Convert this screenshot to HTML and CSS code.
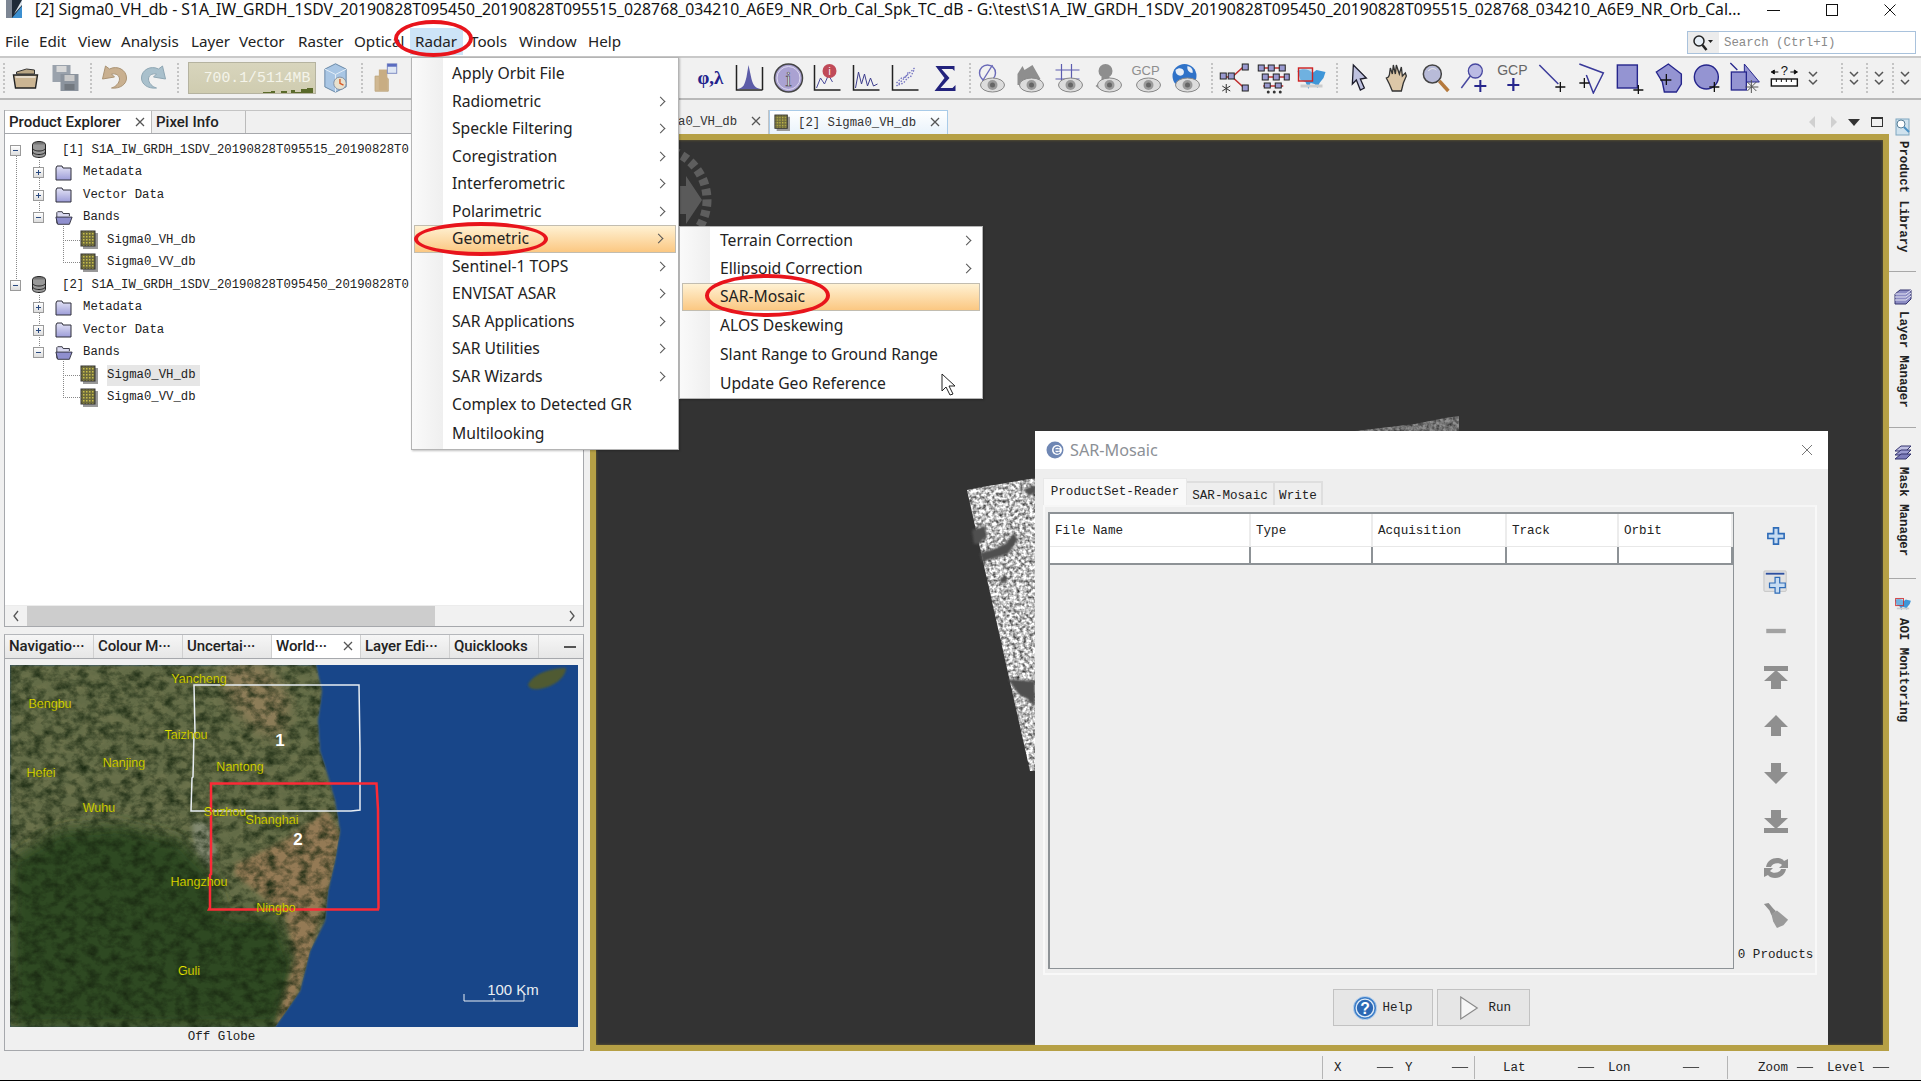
FILE: index.html
```html
<!DOCTYPE html>
<html lang="en">
<head>
<meta charset="utf-8">
<title>SNAP - SAR-Mosaic</title>
<link rel="stylesheet" href="styles.css">
</head>
<body>
<svg class="defs" width="0" height="0" aria-hidden="true">
  <defs>
    <linearGradient id="fold" x1="0" y1="0" x2="0" y2="1"><stop offset="0" stop-color="#e4e4f6"/><stop offset="1" stop-color="#9d9dd8"/></linearGradient>
    <symbol id="i-folder" viewBox="0 0 18 18"><path d="M1 4l1-2h5l1 2h8v12H1z" fill="url(#fold)" stroke="#2e2e3a"/></symbol>
    <symbol id="i-folder-open" viewBox="0 0 20 18"><path d="M2 15V3l1-1h5l1 2h7v3" fill="#d9d9f0" stroke="#2e2e3a"/><path d="M1 8h15l3 0-3 8H3z" fill="#8f8fce" stroke="#2e2e3a"/></symbol>
    <symbol id="i-db" viewBox="0 0 16 18"><ellipse cx="8" cy="3.5" rx="6.5" ry="3" fill="#777" stroke="#222"/><path d="M1.5 3.5v10c0 1.7 3 3 6.5 3s6.500-1.300 6.500-3v-10" fill="#999" stroke="#222"/><path d="M1.500 7c0 1.700 3 3 6.500 3s6.500-1.300 6.500-3M1.500 10.500c0 1.700 3 3 6.500 3s6.500-1.300 6.500-3" fill="none" stroke="#222"/></symbol>
    <pattern id="bandgrid" width="3" height="3" patternUnits="userSpaceOnUse"><rect width="3" height="3" fill="#6d6a3c"/><rect width="1.500" height="1.500" fill="#c7bd4a"/></pattern>
    <symbol id="i-band" viewBox="0 0 18 20"><rect x="3" y="3" width="15" height="16" fill="#999"/><rect x="1" y="1" width="14" height="15" fill="url(#bandgrid)" stroke="#333"/></symbol>

    <symbol id="t-open" viewBox="0 0 32 32"><path d="M6 10l10-3 8 1v4H6z" fill="#b9a684" stroke="#333"/><path d="M3 13h24l-2 13H5z" fill="#cbb593" stroke="#222" stroke-width="1.400"/><path d="M5 15h20" stroke="#fff"/></symbol>
    <symbol id="t-save" viewBox="0 0 32 32"><rect x="3" y="3" width="18" height="17" fill="#9aa2ac"/><rect x="7" y="4" width="10" height="6" fill="#d8d8d8"/><rect x="11" y="12" width="18" height="17" fill="#8b939d"/><rect x="15" y="13" width="10" height="6" fill="#c9c9c9"/><rect x="15" y="22" width="10" height="6" fill="#72787f"/></symbol>
    <symbol id="t-undo" viewBox="0 0 32 32"><path d="M7 4l-3 13 12-2-3-3c5-1 8 2 8 5 0 4-4 8-8 9 9 1 15-4 15-10C28 8 19 3 11 7z" fill="#c9b090" stroke="#ab9475"/></symbol>
    <symbol id="t-redo" viewBox="0 0 32 32"><path d="M25 4l3 13-12-2 3-3c-5-1-8 2-8 5 0 4 4 8 8 9C10 27 4 22 4 16 4 8 13 3 21 7z" fill="#a9c0cc" stroke="#8fa7b4"/></symbol>
    <symbol id="t-cube" viewBox="0 0 32 36"><path d="M4 8l12-6 12 6v20l-12 6-12-6z" fill="#a9c6e4" stroke="#5f7f9f"/><path d="M4 8l12 6 12-6M16 14v20" fill="none" stroke="#e9f1f9"/><circle cx="21" cy="24" r="7" fill="#e7e1cf" stroke="#7b8aa0"/><path d="M21 19v5l4 2" fill="none" stroke="#d9541e" stroke-width="1.500"/></symbol>
    <symbol id="t-export" viewBox="0 0 32 34"><path d="M6 15h11l3 3v13H6z" fill="#d0b892" stroke="#bfa880"/><rect x="10" y="8" width="9" height="22" fill="#c8ad83"/><rect x="19" y="2" width="10" height="10" fill="#dfe7f4" stroke="#7a88c0"/><rect x="19" y="2" width="10" height="3" fill="#5a6cc0"/></symbol>
    <symbol id="t-hist" viewBox="0 0 32 32"><path d="M3 3v25h26M29 28V5" fill="none" stroke="#222" stroke-width="1.500"/><path d="M4 27c6-1 7-4 9-12l2-12 3 14c2 7 4 9 9 10z" fill="#5c5ca8"/></symbol>
    <symbol id="t-info" viewBox="0 0 32 32"><circle cx="16" cy="16" r="14" fill="#aaa2d2" stroke="#444" stroke-width="1.500"/><circle cx="16" cy="16" r="11.500" fill="none" stroke="#dedaf0"/><text x="16" y="24" font-family="Liberation Serif, serif" font-size="22" text-anchor="middle" fill="#eee" stroke="#333" stroke-width=".6">i</text></symbol>
    <symbol id="t-pin" viewBox="0 0 32 32"><path d="M3 3v25h26" fill="none" stroke="#222" stroke-width="1.500"/><path d="M5 26l4-10 4 6 4-9 4 7" fill="none" stroke="#4a4a9a"/><circle cx="18" cy="9" r="7" fill="#c04a58"/><text x="18" y="13" font-size="10" text-anchor="middle" fill="#fff" font-family="Liberation Sans, sans-serif">i</text></symbol>
    <symbol id="t-spec" viewBox="0 0 32 32"><path d="M3 3v25h26" fill="none" stroke="#222" stroke-width="1.500"/><path d="M5 26l3-16 3 12 3-10 3 12 3-8 3 8 4-2" fill="none" stroke="#3c3c8c"/></symbol>
    <symbol id="t-scatter" viewBox="0 0 32 32"><path d="M3 3v25h26" fill="none" stroke="#222" stroke-width="1.500"/><path d="M7 24l4-4 3-3 3-3 4-4 4-4M9 23l5-2 4-5 3-1 4-8M7 21l5-5 4-1 3-5" fill="none" stroke="#7070c0" stroke-width="1.300" stroke-dasharray="1.500 1.500"/></symbol>
    <symbol id="t-sigma" viewBox="0 0 32 32"><path d="M7 4h19v5l-2-2H13l8 9-9 10h12l3-3v6H6l10-13z" fill="#22227c"/></symbol>
    <symbol id="t-eye" viewBox="0 0 32 32"><ellipse cx="18" cy="23" rx="12" ry="7" fill="#dcdcdc" stroke="#888"/><circle cx="18" cy="23" r="5" fill="#9a9a9a"/><circle cx="18" cy="23" r="2.500" fill="#666"/></symbol>
    <symbol id="t-eye1" viewBox="0 0 32 32"><circle cx="13" cy="11" r="8" fill="none" stroke="#6a6ab8" stroke-width="1.400"/><path d="M8 19L18 3" stroke="#6a6ab8" stroke-width="1.400"/><use href="#t-eye"/></symbol>
    <symbol id="t-eye2" viewBox="0 0 32 32"><path d="M4 12l5-8 2 4 8-5 8 14-9 6H4z" fill="#8e8e8e"/><use href="#t-eye"/></symbol>
    <symbol id="t-eye3" viewBox="0 0 32 32"><path d="M9 2v22M19 2v22M3 8h24M3 17h24" stroke="#5c5cb0" stroke-width="1.200"/><use href="#t-eye"/></symbol>
    <symbol id="t-eye4" viewBox="0 0 32 32"><circle cx="14" cy="9" r="7" fill="#8e8e8e"/><path d="M10 15h8v4l-10 8-4-3 6-5z" fill="#8e8e8e"/><use href="#t-eye"/></symbol>
    <symbol id="t-eye5" viewBox="0 0 32 32"><text x="15" y="13" font-size="13" text-anchor="middle" fill="#8e8e8e" font-family="Liberation Sans, sans-serif">GCP</text><use href="#t-eye"/></symbol>
    <symbol id="t-eye6" viewBox="0 0 32 32"><circle cx="15" cy="14" r="12" fill="#2f72c8"/><path d="M6 8c5-4 10 0 8 4-2 3-8 2-8-4zM18 4c4 1 6 4 5 7-3 0-6-3-5-7z" fill="#e8eef6"/><use href="#t-eye"/></symbol>
    <symbol id="t-graph" viewBox="0 0 32 32"><path d="M14 15L26 4M14 15l12 11M4 15h10" stroke="#c03030" stroke-width="1.600"/><rect x="2" y="11" width="6" height="6" fill="#9a9ad0" stroke="#222"/><rect x="10" y="11" width="6" height="6" fill="#9a9ad0" stroke="#222"/><rect x="24" y="2" width="6" height="6" fill="#9a9ad0" stroke="#222"/><rect x="24" y="23" width="6" height="6" fill="#9a9ad0" stroke="#222"/><path d="M8 22v9M4 24l8 5M12 24l-8 5" stroke="#333"/></symbol>
    <symbol id="t-graph2" viewBox="0 0 32 32"><path d="M4 6h24M6 15h24M6 24h20" stroke="#c03030" stroke-width="1.600"/><g fill="#9a9ad0" stroke="#222"><rect x="1" y="3" width="6" height="6"/><rect x="11" y="3" width="6" height="6"/><rect x="22" y="3" width="6" height="6"/><rect x="5" y="12" width="6" height="6"/><rect x="16" y="12" width="6" height="6"/><rect x="27" y="12" width="5" height="6"/><rect x="7" y="21" width="6" height="5"/><rect x="18" y="21" width="6" height="5"/></g><circle cx="11" cy="30" r="1.500" fill="#333"/><circle cx="17" cy="30" r="1.500" fill="#333"/><circle cx="23" cy="30" r="1.500" fill="#333"/></symbol>
    <symbol id="t-aoi" viewBox="0 0 32 32"><path d="M2 9c5-3 12-2 15 2l4-3 9 2-2 6-4 5-2 5-3-4-4-1-2 6-3-7-5-2z" fill="#3f96d8"/><path d="M5 24h22" stroke="#ccc" stroke-width="3"/><rect x="3" y="6" width="14" height="13" fill="#9fcbe8" fill-opacity=".5" stroke="#cf2020" stroke-width="1.400"/></symbol>
    <symbol id="t-cursor" viewBox="0 0 32 32"><path d="M10 3l13 13-6 1 4 9-4 2-4-10-4 4z" fill="#bfc2e0" stroke="#1d1d2c" stroke-width="1.300"/></symbol>
    <symbol id="t-hand" viewBox="0 0 32 32"><path d="M8 13l1-7 2 6 1-9 2 9 1-9 3 9 2-7 1 9 3-3 1 3-3 7-2 8H11l-3-7-3-6 2-1z" fill="#dcc7a8" stroke="#333" stroke-width="1.300"/></symbol>
    <symbol id="t-zoom" viewBox="0 0 32 32"><circle cx="12" cy="12" r="9" fill="#b8bbd8" stroke="#444" stroke-width="1.500"/><path d="M8 9c2-3 6-3 8-1" stroke="#eee" fill="none"/><path d="M19 19l9 10" stroke="#b5793c" stroke-width="3.500"/></symbol>
    <symbol id="t-pinadd" viewBox="0 0 32 32"><circle cx="16" cy="9" r="7" fill="#bbbbe4" stroke="#4848a0" stroke-width="1.300"/><path d="M11 14L2 26" stroke="#4848a0" stroke-width="1.500"/><path d="M21 18v12M15 24h12" stroke="#26268c" stroke-width="2"/></symbol>
    <symbol id="t-gcp" viewBox="0 0 32 32"><text x="15" y="13" font-size="14" text-anchor="middle" fill="#666" font-family="Liberation Sans, sans-serif">GCP</text><path d="M16 16v13M10 23h12" stroke="#26268c" stroke-width="2.200"/></symbol>
    <symbol id="t-line" viewBox="0 0 32 32"><path d="M3 3l19 19" stroke="#3a3a9a" stroke-width="1.500"/><path d="M24 20v10M19 25h10" stroke="#111" stroke-width="1.300"/></symbol>
    <symbol id="t-polyline" viewBox="0 0 32 32"><path d="M4 2l24 9-10 20-7-18" fill="none" stroke="#3a3a9a" stroke-width="1.500"/><path d="M9 16v10M4 21h10" stroke="#111" stroke-width="1.300"/></symbol>
    <symbol id="t-rect" viewBox="0 0 32 32"><rect x="4" y="3" width="20" height="23" fill="#9494d2" stroke="#26268c" stroke-width="1.400"/><path d="M25 23v9M20 28h10" stroke="#111" stroke-width="1.300"/></symbol>
    <symbol id="t-polygon" viewBox="0 0 32 32"><path d="M4 10L16 2l13 10v10l-5 8H12l-2-10z" fill="#9494d2" stroke="#26268c" stroke-width="1.400"/><path d="M14 12v11M8 18h11" stroke="#111" stroke-width="1.300"/></symbol>
    <symbol id="t-circle" viewBox="0 0 32 32"><circle cx="15" cy="15" r="12" fill="#9494d2" stroke="#26268c" stroke-width="1.400"/><path d="M23 20v10M18 25h10" stroke="#111" stroke-width="1.300"/></symbol>
    <symbol id="t-shapes" viewBox="0 0 32 32"><path d="M15 2l15 18H15z" fill="#9494d2" stroke="#26268c"/><path d="M1 1l7 7" stroke="#26268c" stroke-width="1.300"/><rect x="2" y="10" width="15" height="18" fill="#9494d2" stroke="#26268c" stroke-width="1.300"/><path d="M22 18v13M16 25h13M18 20l9 9M27 20l-9 9" stroke="#555" stroke-width="1"/></symbol>
    <symbol id="t-measure" viewBox="0 0 32 32"><text x="16" y="13" font-size="13" text-anchor="middle" fill="#111" font-family="Liberation Sans, sans-serif">?</text><path d="M3 10h7M22 10h7M3 10l3-2v4zM29 10l-3-2v4z" stroke="#111"/><rect x="3" y="17" width="26" height="7" fill="#fff" stroke="#111" stroke-width="1.400"/><path d="M8 17v3M13 17v3M18 17v3M23 17v3" stroke="#111"/></symbol>
    <symbol id="t-chev" viewBox="0 0 12 16"><path d="M2 2l4 4 4-4M2 10l4 4 4-4" fill="none" stroke="#555" stroke-width="1.500"/></symbol>

    <symbol id="d-plus" viewBox="-4 -4 32 32"><path d="M9 2h6v7h7v6h-7v7H9v-7H2V9h7z" fill="#c7dcf2" stroke="#2f6cb8" stroke-width="2"/></symbol>
    <symbol id="d-addfile" viewBox="0 0 28 28"><rect x="1" y="1" width="24" height="22" rx="1" fill="#e2e2e2" stroke="#c2c2c2"/><path d="M3 4h20" stroke="#2c4fa0" stroke-width="2"/><path d="M13 8h5v6h6v5h-6v6h-5v-6H7v-5h6z" fill="#c7dcf2" stroke="#2f6cb8" stroke-width="1.300"/></symbol>
    <symbol id="d-minus" viewBox="0 0 24 24"><rect x="3" y="10" width="18" height="4" fill="#a2a2a2"/></symbol>
    <symbol id="d-top" viewBox="0 0 26 26"><rect x="1" y="1" width="24" height="5" fill="#8f8f8f"/><path d="M13 5l12 11h-7v8H8v-8H1z" fill="#8f8f8f"/></symbol>
    <symbol id="d-up" viewBox="0 0 26 26"><path d="M13 2l12 12h-7v9H8v-9H1z" fill="#8f8f8f"/></symbol>
    <symbol id="d-down" viewBox="0 0 26 26"><path d="M13 24L1 12h7V3h10v9h7z" fill="#8f8f8f"/></symbol>
    <symbol id="d-bottom" viewBox="0 0 26 26"><rect x="1" y="20" width="24" height="5" fill="#8f8f8f"/><path d="M13 21L1 10h7V2h10v8h7z" fill="#8f8f8f"/></symbol>
    <symbol id="d-refresh" viewBox="0 0 26 26"><path d="M3 12C4 6 9 3 14 3c3 0 6 1 7 3l4-2v9h-9l3-3c-3-3-10-2-11 2zM23 14c-1 6-6 9-11 9-3 0-6-1-7-3l-4 2v-9h9l-3 3c3 3 10 2 11-2z" fill="#8f8f8f"/></symbol>
    <symbol id="d-broom" viewBox="0 0 28 28"><path d="M1 1l5-1 5 6 3 3-5 4-2-5z" fill="#8f8f8f"/><path d="M9 12l6-4 12 10-5 6-7 3-4-7z" fill="#9a9a9a"/></symbol>
    <symbol id="b-help" viewBox="0 0 28 28"><circle cx="14" cy="14" r="12.500" fill="#3f7fc8" stroke="#bcd4ee" stroke-width="1"/><circle cx="14" cy="14" r="9.500" fill="#2c68b4" stroke="#e0ecf8" stroke-width="1.400"/><text x="14" y="20" font-size="17" font-weight="700" text-anchor="middle" fill="#fff" font-family="Liberation Sans, sans-serif">?</text></symbol>
    <symbol id="b-run" viewBox="0 0 24 28"><path d="M3 2l18 12L3 26z" fill="#f6f6f6" stroke="#8a8a8a" stroke-width="1.300"/></symbol>
    <symbol id="s-lib" viewBox="0 0 18 18"><rect x="2" y="1" width="13" height="16" fill="#cfe2ee" stroke="#7ea6bf"/><circle cx="7" cy="6" r="4" fill="#fff" stroke="#5a7f97"/><path d="M10 9l5 5" stroke="#4a90c4" stroke-width="2"/></symbol>
    <symbol id="s-layer" viewBox="0 0 18 18"><path d="M1 6l5-4h11v9l-5 5H1z" fill="#8d8dc4" stroke="#34346e"/><path d="M1 9h11l5-4M1 12h11l5-4M1 6h11l5-4" fill="none" stroke="#e6e6f4"/></symbol>
    <symbol id="s-mask" viewBox="0 0 18 18"><path d="M1 7l6-5h10l-5 5z" fill="#bfbfe2" stroke="#34346e"/><path d="M1 11l6-5h10l-5 5z" fill="#9a9ad0" stroke="#34346e"/><path d="M1 15l6-5h10l-5 5z" fill="#7d7dbb" stroke="#34346e"/></symbol>
    <symbol id="a-x" viewBox="0 0 10 10"><path d="M1 1l8 8M9 1l-8 8" stroke="#555" stroke-width="1.300"/></symbol>
    <symbol id="a-right" viewBox="0 0 8 12"><path d="M2 1l4 5-4 5" fill="none" stroke="#555" stroke-width="1.300"/></symbol>
    <filter id="speckle" x="0" y="0" width="100%" height="100%" color-interpolation-filters="sRGB"><feTurbulence type="fractalNoise" baseFrequency=".3" numOctaves="2" seed="4"/><feColorMatrix values="0 1.500 0 0 0  0 1.500 0 0 0  0 1.500 0 0 0  0 0 0 0 1"/><feGaussianBlur stdDeviation=".6"/><feComposite in2="SourceAlpha" operator="in"/></filter>
    <filter id="terrain" x="0" y="0" width="100%" height="100%" color-interpolation-filters="sRGB"><feTurbulence type="fractalNoise" baseFrequency=".09 .12" numOctaves="4" seed="8"/><feColorMatrix values="0 0 0 0 .10  0 0 0 0 .16  0 0 0 0 .07  0 1.900 0 0 -.72"/><feComposite in2="SourceAlpha" operator="in"/></filter>
    <filter id="lighter" x="0" y="0" width="100%" height="100%" color-interpolation-filters="sRGB"><feTurbulence type="fractalNoise" baseFrequency=".07 .1" numOctaves="4" seed="21"/><feColorMatrix values="0 0 0 0 .58  0 0 0 0 .56  0 0 0 0 .38  0 2.400 0 0 -.95"/><feComposite in2="SourceAlpha" operator="in"/></filter>
    <filter id="soft" x="-10%" y="-10%" width="120%" height="120%"><feGaussianBlur stdDeviation="7"/></filter>
    <filter id="soft2" x="-10%" y="-10%" width="120%" height="120%"><feGaussianBlur stdDeviation="2.500"/></filter>
    <filter id="soft1" x="-5%" y="-5%" width="110%" height="110%"><feGaussianBlur stdDeviation="1.200"/></filter>
    <clipPath id="landclip"><path d="M306 0l6 26-4 30 2 30 8 25 7 25 5 30-5 30-7 30-3 30-15 30-10 40-25 36H0V0z"/></clipPath>
  </defs>
</svg>

<div class="app">
  <header class="titlebar">
    <svg class="appicon" viewBox="0 0 16 18"><rect width="16" height="18" fill="#1f2a38"/><rect x="0" width="6" height="18" fill="#7d8694"/><path d="M6 18L16 6v12z" fill="#3c8fd0"/><path d="M16 0v5L8 14z" fill="#dfe7ee"/></svg>
    <span class="titletext">[2] Sigma0_VH_db - S1A_IW_GRDH_1SDV_20190828T095450_20190828T095515_028768_034210_A6E9_NR_Orb_Cal_Spk_TC_dB - G:\test\S1A_IW_GRDH_1SDV_20190828T095450_20190828T095515_028768_034210_A6E9_NR_Orb_Cal...</span>
    <div class="winctrls">
      <span class="wc wc-min"></span>
      <span class="wc wc-max"></span>
      <svg class="wc-close" viewBox="0 0 12 12"><path d="M.5.5l11 11M11.500.5l-11 11" stroke="#111"/></svg>
    </div>
  </header>

  <nav class="menubar">
    <span class="mi m-file">File</span><span class="mi m-edit">Edit</span><span class="mi m-view">View</span><span class="mi m-ana">Analysis</span><span class="mi m-lay">Layer</span><span class="mi m-vec">Vector</span><span class="mi m-ras">Raster</span><span class="mi m-opt">Optical</span><span class="mi m-rad">Radar</span><span class="mi m-too">Tools</span><span class="mi m-win">Window</span><span class="mi m-hel">Help</span>
    <div class="search">
      <span class="searchicon"><svg width="22" height="18" viewBox="0 0 22 18"><circle cx="7" cy="7" r="5" fill="#e6eef6" stroke="#222" stroke-width="1.500"/><path d="M10.500 11l4 5" stroke="#222" stroke-width="2.500"/><path d="M16 6h5l-2.500 3z" fill="#222"/></svg></span>
      <span class="searchtext">Search (Ctrl+I)</span>
    </div>
  </nav>

  <div class="toolbar">
    <span class="sep s1"></span>
    <svg class="tool"><use href="#t-open"/></svg>
    <svg class="tool"><use href="#t-save"/></svg>
    <span class="sep s2"></span>
    <svg class="tool"><use href="#t-undo"/></svg>
    <svg class="tool"><use href="#t-redo"/></svg>
    <span class="sep s3"></span>
    <div class="memory"><span class="memtext">700.1/5114MB</span><svg class="memgraph" viewBox="0 0 50 6" preserveAspectRatio="none"><path d="M0 6V5h8V4h4v2h6V4h6v2h4V3h4v2h6V2h6v-1h6v5z" fill="#5a6a2a"/></svg></div>
    <svg class="tool"><use href="#t-cube"/></svg>
    <span class="sep s2"></span>
    <svg class="tool"><use href="#t-export"/></svg>
    <span class="tool-gap"></span>
    <span class="tool philam">φ,λ</span>
    <svg class="tool"><use href="#t-hist"/></svg>
    <svg class="tool"><use href="#t-info"/></svg>
    <svg class="tool"><use href="#t-pin"/></svg>
    <svg class="tool"><use href="#t-spec"/></svg>
    <svg class="tool"><use href="#t-scatter"/></svg>
    <svg class="tool"><use href="#t-sigma"/></svg>
    <span class="sep s4 s4a"></span>
    <svg class="tool"><use href="#t-eye1"/></svg>
    <svg class="tool"><use href="#t-eye2"/></svg>
    <svg class="tool"><use href="#t-eye3"/></svg>
    <svg class="tool"><use href="#t-eye4"/></svg>
    <svg class="tool"><use href="#t-eye5"/></svg>
    <svg class="tool"><use href="#t-eye6"/></svg>
    <span class="sep s4 s4b"></span>
    <svg class="tool tool-g"><use href="#t-graph"/></svg>
    <svg class="tool tool-g"><use href="#t-graph2"/></svg>
    <svg class="tool tool-w"><use href="#t-aoi"/></svg>
    <span class="sep s4"></span>
    <svg class="tool tool-n"><use href="#t-cursor"/></svg>
    <svg class="tool tool-n"><use href="#t-hand"/></svg>
    <svg class="tool tool-n"><use href="#t-zoom"/></svg>
    <svg class="tool tool-n"><use href="#t-pinadd"/></svg>
    <svg class="tool tool-n"><use href="#t-gcp"/></svg>
    <svg class="tool tool-n"><use href="#t-line"/></svg>
    <svg class="tool tool-n"><use href="#t-polyline"/></svg>
    <svg class="tool tool-n"><use href="#t-rect"/></svg>
    <svg class="tool tool-n"><use href="#t-polygon"/></svg>
    <svg class="tool tool-n"><use href="#t-circle"/></svg>
    <svg class="tool tool-n"><use href="#t-shapes"/></svg>
    <svg class="tool tool-n"><use href="#t-measure"/></svg>
    <svg class="chev chev-first"><use href="#t-chev"/></svg>
    <span class="sep s6"></span>
    <svg class="chev"><use href="#t-chev"/></svg>
    <span class="sep s5"></span>
    <svg class="chev"><use href="#t-chev"/></svg>
    <span class="sep s5"></span>
    <svg class="chev"><use href="#t-chev"/></svg>
  </div>

  <main class="workspace">
    <section class="leftcol">
      <div class="panel toppanel">
        <div class="ptabs">
          <span class="ptab active tab-pe">Product Explorer<svg class="x"><use href="#a-x"/></svg></span>
          <span class="ptab tab-pi">Pixel Info</span>
        </div>
        <div class="treearea">
          <div class="tree">
            <span class="vl vl-root1"></span><span class="vl vl-a1"></span><span class="vl vl-b1"></span><span class="vl vl-a2"></span><span class="vl vl-b2"></span>
            <div class="row l0"><span class="exp"></span><svg class="ic-db"><use href="#i-db"/></svg><span class="lbl">[1] S1A_IW_GRDH_1SDV_20190828T095515_20190828T0</span></div>
            <div class="row l1"><span class="exp plus"></span><svg class="ic-f"><use href="#i-folder"/></svg><span class="lbl">Metadata</span></div>
            <div class="row l1"><span class="exp plus"></span><svg class="ic-f"><use href="#i-folder"/></svg><span class="lbl">Vector Data</span></div>
            <div class="row l1"><span class="exp"></span><svg class="ic-f"><use href="#i-folder-open"/></svg><span class="lbl">Bands</span></div>
            <div class="row l2"><span class="hl"></span><svg class="ic-b"><use href="#i-band"/></svg><span class="lbl">Sigma0_VH_db</span></div>
            <div class="row l2"><span class="hl"></span><svg class="ic-b"><use href="#i-band"/></svg><span class="lbl">Sigma0_VV_db</span></div>
            <div class="row l0"><span class="exp"></span><svg class="ic-db"><use href="#i-db"/></svg><span class="lbl">[2] S1A_IW_GRDH_1SDV_20190828T095450_20190828T0</span></div>
            <div class="row l1"><span class="exp plus"></span><svg class="ic-f"><use href="#i-folder"/></svg><span class="lbl">Metadata</span></div>
            <div class="row l1"><span class="exp plus"></span><svg class="ic-f"><use href="#i-folder"/></svg><span class="lbl">Vector Data</span></div>
            <div class="row l1"><span class="exp"></span><svg class="ic-f"><use href="#i-folder-open"/></svg><span class="lbl">Bands</span></div>
            <div class="row l2"><span class="hl"></span><svg class="ic-b"><use href="#i-band"/></svg><span class="lbl sel">Sigma0_VH_db</span></div>
            <div class="row l2"><span class="hl"></span><svg class="ic-b"><use href="#i-band"/></svg><span class="lbl">Sigma0_VV_db</span></div>
          </div>
          <div class="hscroll">
            <svg class="sarrow flip"><use href="#a-right"/></svg>
            <span class="sthumbtrack"><span class="sthumb"></span></span>
            <svg class="sarrow"><use href="#a-right"/></svg>
          </div>
        </div>
      </div>

      <div class="panel botpanel">
        <div class="btabs">
          <span class="btab">Navigatio···</span><span class="btab">Colour M···</span><span class="btab">Uncertai···</span><span class="btab active">World···<svg class="x"><use href="#a-x"/></svg></span><span class="btab">Layer Edi···</span><span class="btab">Quicklooks</span><span class="btab minimize"><span class="dash"></span></span>
        </div>
        <div class="mapwrap">
          <svg class="map" viewBox="0 0 568 362" width="568" height="362">
            <rect width="568" height="362" fill="#17467f"/>
            <path d="M300 0h268v362H250z" fill="#184689"/>
            <path d="M306 0l6 26-4 30 2 30 8 25 7 25 5 30-5 30-7 30-3 30-15 30-10 40-25 36H0V0z" fill="#646c47" filter="url(#soft1)"/>
            <g clip-path="url(#landclip)">
              <rect width="568" height="362" filter="url(#lighter)" opacity=".22"/>
              <path d="M0 195l50-30 60-5 60 15 30 30 15 45 50 0 20 50-15 62H0z" fill="#2d4a20" filter="url(#soft)"/>
              <path d="M215 0h40l25 35-10 40-30-15-25-30z" fill="#8d7d58" filter="url(#soft)"/>
              <path d="M225 200l50-25 42-30 14 25-8 40-10 30-12 50-22 62-14 10 20-70-10-42-30-25-20-15z" fill="#947a54" filter="url(#soft2)"/>
              <path d="M182 155l18 4 6 30-8 14-14-20z" fill="#838a72" filter="url(#soft2)"/>
              <rect width="568" height="362" filter="url(#terrain)"/>
            </g>
            <path d="M518 20c5-12 25-17 38-17 0 9-12 18-22 20-8 2-14 2-16-3z" fill="#4f5a30" filter="url(#soft1)"/>
            <path d="M184 20h165l1 63v62l-9 1H181l1-33 1-1 1-43 1-1z" fill="none" stroke="#e8eef4" stroke-width="1.500"/>
            <path d="M201 118.500h165.500l1.500 26 .5 98-.5 2H199l1-2V210l1-1z" fill="none" stroke="#fb2a36" stroke-width="2.500"/>
            <g class="maplabels">
              <text x="189" y="18" text-anchor="middle">Yancheng</text>
              <text x="40" y="43" text-anchor="middle">Bengbu</text>
              <text x="176" y="74" text-anchor="middle">Taizhou</text>
              <text x="114" y="102" text-anchor="middle">Nanjing</text>
              <text x="31" y="112" text-anchor="middle">Hefei</text>
              <text x="230" y="106" text-anchor="middle">Nantong</text>
              <text x="89" y="147" text-anchor="middle">Wuhu</text>
              <text x="215" y="151" text-anchor="middle">Suzhou</text>
              <text x="262" y="159" text-anchor="middle">Shanghai</text>
              <text x="189" y="221" text-anchor="middle">Hangzhou</text>
              <text x="266" y="247" text-anchor="middle">Ningbo</text>
              <text x="179" y="310" text-anchor="middle">Guli</text>
            </g>
            <text class="mapnum" x="270" y="81" text-anchor="middle">1</text>
            <text class="mapnum" x="288" y="180" text-anchor="middle">2</text>
            <text class="mapscale" x="503" y="330" text-anchor="middle">100 Km</text>
            <path d="M454 329v7h60v-7M484 333v3" fill="none" stroke="#e8eef4"/>
          </svg>
        </div>
        <div class="offglobe">Off Globe</div>
      </div>
    </section>

    <section class="centercol">
      <div class="doctabs">
        <span class="dtab">[1] Sigma0_VH_db<svg class="x"><use href="#a-x"/></svg></span>
        <span class="dtab active"><svg class="ic-b"><use href="#i-band"/></svg>[2] Sigma0_VH_db<svg class="x"><use href="#a-x"/></svg></span>
        <span class="docnav">
          <span class="arr arr-l"></span><span class="arr arr-r"></span><span class="arr arr-d"></span><span class="maxbox"></span>
        </span>
      </div>
      <div class="viewer">
        <svg class="canvas" width="1287" height="905" viewBox="596 140 1287 905">
          <g class="spinner" fill="none" stroke="#5e5e5e" stroke-width="9">
            <circle cx="655" cy="200" r="52" stroke-dasharray="6.500 4"/>
          </g>
          <path d="M680 186h6v-10l16 24-16 24v-10h-6z" fill="#5a5a5a"/>
          <path d="M967 490l15-3 60-10v294h-12z" fill="#fff" filter="url(#speckle)"/>
          <path d="M1355 431l60-7 30-6 14-2v15z" fill="#fff" filter="url(#speckle)" opacity=".45"/>
          <g fill="#505050" filter="url(#soft1)">
            <path d="M972 530l13-4 2 10-8 8h-5z"/>
            <path d="M980 553l16-5 10-5 8-11 4 8-10 14-16 5-10 3z"/>
            <path d="M1008 679l27 2v26l-8-8-9-5-4-6z"/>
            <path d="M1024 489l12-4v8l-8 3z"/>
            <path d="M1000 578l6-2 2 6-8 1z"/>
          </g>
        </svg>
      </div>
    </section>

    <aside class="sidebar">
      <div class="sideitem"><svg class="sideicon"><use href="#s-lib"/></svg><span class="vtext">Product Library</span></div>
      <div class="sideitem"><svg class="sideicon"><use href="#s-layer"/></svg><span class="vtext">Layer Manager</span></div>
      <div class="sideitem"><svg class="sideicon"><use href="#s-mask"/></svg><span class="vtext">Mask Manager</span></div>
      <div class="sideitem last"><svg class="sideicon"><use href="#t-aoi"/></svg><span class="vtext">AOI Monitoring</span></div>
    </aside>
  </main>

  <footer class="statusbar">
    <div class="stcell c-xy"><span class="st w1">X</span><span class="st d w2">—</span><span class="st w3">Y</span><span class="st d">—</span></div>
    <div class="stcell c-ll"><span class="st w4">Lat</span><span class="st d w5">—</span><span class="st w6">Lon</span><span class="st d">—</span></div>
    <div class="stcell c-zl"><span class="st w7">Zoom</span><span class="st d w5">—</span><span class="st w8">Level</span><span class="st d">—</span></div>
  </footer>
</div>

<!-- Radar menu -->
<div class="menu radarmenu">
  <div class="mrow">Apply Orbit File</div>
  <div class="mrow sub">Radiometric</div>
  <div class="mrow sub">Speckle Filtering</div>
  <div class="mrow sub">Coregistration</div>
  <div class="mrow sub">Interferometric</div>
  <div class="mrow sub">Polarimetric</div>
  <div class="mrow sub hot">Geometric</div>
  <div class="mrow sub">Sentinel-1 TOPS</div>
  <div class="mrow sub">ENVISAT ASAR</div>
  <div class="mrow sub">SAR Applications</div>
  <div class="mrow sub">SAR Utilities</div>
  <div class="mrow sub">SAR Wizards</div>
  <div class="mrow tall">Complex to Detected GR</div>
  <div class="mrow tall">Multilooking</div>
</div>
<div class="menu geomenu">
  <div class="mrow sub">Terrain Correction</div>
  <div class="mrow sub">Ellipsoid Correction</div>
  <div class="mrow hot">SAR-Mosaic</div>
  <div class="mrow low">ALOS Deskewing</div>
  <div class="mrow low">Slant Range to Ground Range</div>
  <div class="mrow low">Update Geo Reference</div>
</div>

<!-- SAR-Mosaic dialog -->
<div class="dialog">
  <div class="dtitle">
    <svg class="dlogo" viewBox="0 0 18 18"><circle cx="9" cy="9" r="8.500" fill="#6f87b4"/><circle cx="11" cy="9" r="5" fill="#fff"/><path d="M8.500 9h5M13.500 7a3 3 0 1 0 0 4" fill="none" stroke="#6f87b4" stroke-width="1.400"/></svg>
    <span class="dtitletext">SAR-Mosaic</span>
    <svg class="dclose" viewBox="0 0 12 12"><path d="M1 1l10 10M11 1L1 11" stroke="#777"/></svg>
  </div>
  <div class="dbody">
    <div class="dtabs">
      <span class="dlgtab active">ProductSet-Reader</span><span class="dlgtab">SAR-Mosaic</span><span class="dlgtab">Write</span>
    </div>
    <div class="dpanel">
      <div class="dtable">
        <div class="thead"><span class="th col1">File Name</span><span class="th col2">Type</span><span class="th col3">Acquisition</span><span class="th col4">Track</span><span class="th col5">Orbit</span></div>
        <div class="tblank"><span class="td col1"></span><span class="td col2"></span><span class="td col3"></span><span class="td col4"></span><span class="td col5"></span></div>
      </div>
      <div class="dside">
        <svg class="dicon"><use href="#d-plus"/></svg>
        <svg class="dicon"><use href="#d-addfile"/></svg>
        <svg class="dicon"><use href="#d-minus"/></svg>
        <svg class="dicon"><use href="#d-top"/></svg>
        <svg class="dicon"><use href="#d-up"/></svg>
        <svg class="dicon"><use href="#d-down"/></svg>
        <svg class="dicon"><use href="#d-bottom"/></svg>
        <svg class="dicon"><use href="#d-refresh"/></svg>
        <svg class="dicon"><use href="#d-broom"/></svg>
        <span class="products">0 Products</span>
      </div>
    </div>
    <div class="dbuttons">
      <span class="btn btn-help"><svg class="bicon"><use href="#b-help"/></svg>Help</span>
      <span class="btn btn-run"><svg class="bicon"><use href="#b-run"/></svg>Run</span>
    </div>
  </div>
</div>

<!-- annotations -->
<span class="ring ring-radar"></span>
<span class="ring ring-geo"></span>
<span class="ring ring-sar"></span>
<svg class="pointer" viewBox="0 0 15 23"><path d="M1 1v17l4-4 4 8 3-1-4-8h6z" fill="#fff" stroke="#222"/></svg>
</body>
</html>
```
FILE: styles.css
```css
* { box-sizing: border-box; }
html, body { margin: 0; padding: 0; width: 1921px; height: 1081px; overflow: hidden; background: #f0f0f0; }
body { font-family: "Noto Sans", sans-serif; color: #222; position: relative; }
.defs { position: absolute; }
.app { display: flex; flex-direction: column; width: 1921px; height: 1081px; }

/* title bar */
.titlebar { height: 27px; background: #fff; display: flex; align-items: flex-start; flex: none; position: relative; }
.appicon { width: 16px; height: 18px; margin-left: 6px; flex: none; }
.titletext { margin-left: 13px; font-size: 15.780px; line-height: 19px; color: #111; white-space: nowrap; flex: none; }
.winctrls { margin-left: auto; display: flex; align-items: center; height: 20px; flex: none; }
.wc-min, .wc-max, .wc-close { display: block; }
.wc-min { width: 13px; height: 1px; background: #111; margin-right: 46px; }
.wc-max { width: 12px; height: 12px; border: 1px solid #111; margin-right: 46px; }
.wc-close { width: 12px; height: 12px; margin-right: 25px; }

/* menu bar */
.menubar { height: 29px; background: #fff; display: flex; align-items: center; flex: none; font-size: 15.200px; color: #222; position: relative; }
.mi { display: block; height: 27px; line-height: 26px; flex: none; }
.m-file { margin-left: 5px; width: 34px; }
.m-edit { width: 39px; }
.m-view { width: 43px; }
.m-ana { width: 70px; }
.m-lay { width: 48px; }
.m-vec { width: 59px; }
.m-ras { width: 56px; }
.m-opt { width: 56px; }
.m-rad { width: 53px; padding-left: 5px; background: #cde4f7; }
.m-too { width: 56px; padding-left: 7px; }
.m-win { width: 69px; }
.m-hel { width: 40px; }
.search { margin-left: auto; margin-right: 5px; width: 229px; height: 23px; border: 1px solid #a9c2dc; display: flex; background: #fff; margin-top: 2px; }
.searchicon { width: 31px; background: #ececec; display: flex; align-items: center; padding-left: 4px; }
.searchtext { font: 12.400px "Liberation Mono", monospace; color: #8a8a8a; line-height: 23px; margin-left: 5px; }

/* toolbar */
.toolbar { height: 44px; flex: none; border-top: 2px solid #c9c9c9; border-bottom: 2px solid #b9b9b9; background: #f1f1f1; display: flex; align-items: center; overflow: hidden; }
.tool { width: 39px; height: 32px; flex: none; display: block; }
.tool-n { width: 38.700px; }
.tool-w { width: 39px; }
.sep { display: block; width: 2px; height: 30px; flex: none; background-image: linear-gradient(#c4c4c4 50%, transparent 50%); background-size: 2px 4px; }
.s1 { margin-left: 3px; margin-right: 1.500px; }
.s2 { margin-left: 5.500px; margin-right: 2.500px; }
.s3 { margin-left: 4.500px; margin-right: 9px; }
.s4 { margin-left: 4.500px; margin-right: 2px; }
.s4a { margin-right: 0; }
.s4b { margin-left: 6.500px; }
.tool-g { width: 38.500px; }
.s5 { margin-left: 6.500px; margin-right: 5px; }
.s6 { margin-left: 22px; margin-right: 5px; }
.memory { width: 128px; height: 32px; flex: none; position: relative; background: linear-gradient(#d8d5bd, #cfccb0); border: 1px solid #b5b3a0; text-align: center; }
.memtext { font: 14.800px/30px "Liberation Mono", monospace; color: #f4f4ea; display: block; padding-left: 10px; }
.memgraph { position: absolute; right: 2px; bottom: 0; width: 50px; height: 6px; }
.tool-gap { width: 287px; flex: none; }
.philam { color: #22228c; font: 700 19px/32px "Liberation Serif", serif; text-align: center; }
.chev { width: 12px; height: 16px; flex: none; }
.chev-first { margin-left: 3px; }

/* workspace */
.workspace { flex: 1; display: flex; min-height: 0; }
.leftcol { width: 590px; flex: none; padding: 10px 6px 0 4px; display: flex; flex-direction: column; gap: 7px; }
.panel { border: 1px solid #a6a8ac; background: #f0f0f0; display: flex; flex-direction: column; }
.toppanel { height: 517px; border-top: 0; }
.botpanel { height: 417px; border-top: 1px solid #b5b7bb; }
.ptabs { height: 24px; display: flex; border-top: 1px solid #c4c4c4; border-bottom: 1px solid #a6a8ac; flex: none; font: 500 15px/23px Roboto, sans-serif; color: #222; }
.ptab { display: block; padding-left: 4px; border-right: 1px solid #bbb; position: relative; }
.ptab.active { background: #fff; }
.tab-pe { width: 147px; }
.tab-pi { width: 94px; }
.x { position: absolute; width: 10px; height: 10px; }
.tab-pe .x { right: 6px; top: 6px; }
.treearea { flex: 1; background: #fff; display: flex; flex-direction: column; min-height: 0; }
.tree { flex: 1; position: relative; padding-top: 5px; overflow: hidden; font: 12.300px "Liberation Mono", monospace; color: #222; }
.row { height: 22.500px; display: flex; align-items: center; white-space: nowrap; position: relative; }
.l0 { padding-left: 5px; }
.l1 { padding-left: 28px; }
.l2 { padding-left: 58px; }
.exp { width: 11px; height: 11px; border: 1px solid #9a9a9a; background: linear-gradient(#fff, #ddd); flex: none; position: relative; }
.exp::before { content: ""; position: absolute; left: 2px; right: 2px; top: 4px; height: 1px; background: #2a4a80; }
.exp.plus::after { content: ""; position: absolute; top: 2px; bottom: 2px; left: 4px; width: 1px; background: #2a4a80; }
.ic-db { width: 16px; height: 18px; margin-left: 10px; margin-right: 15px; flex: none; }
.ic-f { width: 18px; height: 18px; margin-left: 11px; margin-right: 10px; flex: none; }
.ic-b { width: 18px; height: 20px; flex: none; margin-right: 9px; }
.hl { width: 17px; height: 1px; flex: none; background-image: linear-gradient(90deg, #888 50%, transparent 50%); background-size: 2px 1px; }
.lbl { display: block; padding: 3px 0; line-height: 15px; }
.sel { background: #e6e6e6; padding-right: 4px; margin-right: -4px; }
.vl { position: absolute; width: 1px; background-image: linear-gradient(#888 50%, transparent 50%); background-size: 1px 2px; }
.vl-root1 { left: 11px; top: 22px; height: 129px; }
.vl-a1 { left: 34px; top: 26px; height: 52px; }
.vl-b1 { left: 58px; top: 92px; height: 37px; }
.vl-a2 { left: 34px; top: 161px; height: 52px; }
.vl-b2 { left: 58px; top: 227px; height: 37px; }
.hscroll { height: 21px; flex: none; display: flex; align-items: center; background: #f1f1f1; border-top: 1px solid #ececec; }
.sarrow { width: 8px; height: 12px; margin: 0 7px; flex: none; }
.flip { transform: scaleX(-1); }
.sthumbtrack { flex: 1; height: 100%; display: block; }
.sthumb { display: block; height: 100%; width: 408px; background: #cdcdcd; }

.btabs { height: 24px; display: flex; border-bottom: 1px solid #a6a8ac; flex: none; font: 500 15px/23px Roboto, sans-serif; background: #f0f0f0; white-space: nowrap; }
.btab { display: block; width: 89px; padding-left: 4px; border-right: 1px solid #d0d0d0; background: linear-gradient(#f6f6f6, #e6e6e6); position: relative; letter-spacing: -.1px; }
.btab.active { background: #fff; }
.btab.active .x { right: 7px; top: 6px; }
.btab.minimize { flex: 1; border-right: 0; position: relative; }
.dash { position: absolute; right: 7px; top: 11px; width: 12px; height: 2px; background: #555; }
.mapwrap { height: 368px; padding: 6px 0 0 5px; flex: none; }
.map { display: block; }
.maplabels text { font: 12.500px "Liberation Sans", sans-serif; fill: #eaea00; stroke: #3c3c00; stroke-width: .2px; }
.mapnum { font: 700 17px "Liberation Sans", sans-serif; fill: #fff; }
.mapscale { font: 15px "Liberation Sans", sans-serif; fill: #eaeef2; }
.offglobe { text-align: center; font: 12.500px/21px "Liberation Mono", monospace; color: #222; padding-right: 145px; }

.centercol { flex: 1; display: flex; flex-direction: column; min-width: 0; padding-top: 10px; }
.doctabs { height: 24px; flex: none; display: flex; align-items: flex-end; font: 12.300px/22px "Liberation Mono", monospace; color: #333; }
.dtab { display: flex; align-items: center; height: 24px; position: relative; background: #f0f0f0; white-space: nowrap; }
.dtab:first-child { width: 179px; padding-left: 29px; border-right: 1px solid #c4c4c4; }
.dtab .x { right: 7px; top: 6px; }
.dtab.active { width: 179px; padding-left: 4px; border: 1px solid #a9cbe8; border-bottom: 0; background: linear-gradient(#fff, #e9f3fb); }
.dtab.active .ic-b { margin-right: 8px; width: 16px; height: 18px; }
.docnav { margin-left: auto; display: flex; align-items: center; height: 24px; padding-right: 3px; }
.arr { display: block; width: 0; height: 0; margin-right: 10px; }
.arr-l { border: 6px solid transparent; border-left-width: 0; border-right: 6px solid #d0d0d0; margin-right: 16px; }
.arr-r { border: 6px solid transparent; border-right-width: 0; border-left: 6px solid #d0d0d0; margin-right: 11px; }
.arr-d { border: 6px solid transparent; border-top: 7px solid #333; border-bottom-width: 0; margin-right: 11px; }
.maxbox { display: block; width: 12px; height: 10px; border: 1px solid #333; border-top-width: 2px; margin-right: 3px; }
.viewer { flex: 1; background: #333; border: 6px solid #b6a045; box-shadow: inset 0 0 3px #6f6130; position: relative; overflow: hidden; min-height: 0; }
.canvas { display: block; position: absolute; left: 0; top: 0; }

.sidebar { width: 32px; flex: none; padding-top: 18px; display: flex; flex-direction: column; font: 700 12.400px "Liberation Mono", monospace; color: #222; }
.sideitem { display: flex; flex-direction: column; align-items: center; padding: 0 0 18px; margin-bottom: 16px; border-bottom: 1px solid #a8a8a8; margin-right: 5px; }
.sideitem:nth-child(2) { padding-bottom: 20px; }
.sideitem:nth-child(3) { padding-bottom: 22px; }
.sideitem.last { border-bottom: 0; }
.sideicon { width: 18px; height: 18px; margin-bottom: 5px; flex: none; }
.vtext { writing-mode: vertical-rl; line-height: 16px; white-space: nowrap; }

/* status */
.statusbar { height: 30px; flex: none; border-bottom: 1px solid #000; display: flex; align-items: center; padding: 4px 0 0 1322px; font: 12.500px "Liberation Mono", monospace; color: #222; }
.stcell { height: 23px; border-left: 1px solid #b5b5b5; display: flex; align-items: center; flex: none; }
.c-xy { width: 152px; padding-left: 11px; }
.c-ll { width: 253px; padding-left: 28px; }
.c-zl { padding-left: 30px; }
.st { display: block; flex: none; }
.d { width: 16px; transform: scaleX(2.130); transform-origin: left center; color: #333; }
.w1 { width: 42.500px; }
.w2 { margin-right: 12.500px; }
.w3 { width: 46.500px; }
.w4 { width: 75px; }
.w5 { margin-right: 14px; }
.w6 { width: 75px; }
.w7 { width: 39px; }
.w8 { width: 46px; }

/* menus */
.menu { position: absolute; background: #fff; border: 1px solid #b4b4b4; box-shadow: 1px 1px 2px rgba(0,0,0,.25); font-size: 15.700px; color: #222; z-index: 1; }
.menu::before { content: ""; position: absolute; top: 0; bottom: 0; left: 0; background: linear-gradient(90deg, #fafafa, #efefef); }
.radarmenu { left: 411px; top: 57px; width: 268px; height: 393px; padding-top: 2px; }
.radarmenu::before { width: 31px; }
.geomenu { left: 679px; top: 226px; width: 304px; height: 173px; padding-top: 0; }
.geomenu::before { width: 30px; }
.mrow { height: 27.500px; line-height: 26px; white-space: nowrap; position: relative; z-index: 1; }
.radarmenu .mrow { padding-left: 40px; }
.geomenu .mrow { padding-left: 40px; height: 28px; line-height: 26px; }
.geomenu .mrow.low { height: 29px; line-height: 28px; }
.mrow.tall { height: 29px; line-height: 29px; }
.sub::after { content: ""; position: absolute; right: 14px; top: 10px; width: 6px; height: 6px; border-top: 1.300px solid #555; border-right: 1.300px solid #555; transform: rotate(45deg); }
.geomenu .sub::after { right: 12px; }
.hot { background: linear-gradient(#fff3d6, #fbc67f); box-shadow: inset 0 0 0 1px #c2bdb0; }
.radarmenu .mrow.hot { margin-left: 2px; margin-right: 2px; padding-left: 38px; }
.geomenu .mrow.hot { margin-left: 2px; margin-right: 2px; padding-left: 38px; }

/* dialog */
.dialog { position: absolute; left: 1035px; top: 431px; width: 793px; height: 614px; background: #eee; display: flex; flex-direction: column; z-index: 1; }
.dtitle { height: 38px; background: #fff; display: flex; align-items: center; padding-left: 11px; flex: none; }
.dlogo { width: 18px; height: 18px; flex: none; }
.dtitletext { margin-left: 6px; font-size: 16.200px; color: #8c9096; }
.dclose { width: 12px; height: 12px; margin-left: auto; margin-right: 15px; }
.dbody { flex: 1; padding: 9px 11px 0 8px; display: flex; flex-direction: column; }
.dtabs { display: flex; align-items: flex-end; height: 27px; flex: none; font: 12.600px "Liberation Mono", monospace; color: #222; }
.dlgtab { display: block; height: 24px; line-height: 26px; padding: 0; border: 2px solid #dedede; border-bottom: 0; border-left-width: 0; text-align: center; white-space: nowrap; }
.dlgtab.active { width: 144px; height: 27px; background: #f9f9f9; line-height: 27px; border: 1px solid #e8e8e8; border-bottom: 0; }
.dlgtab:nth-child(2) { width: 88px; }
.dlgtab:nth-child(3) { width: 48px; }
.dpanel { height: 470px; flex: none; display: flex; border: 2px solid #f8f8f8; border-top-color: #f6f6f6; padding: 5px 0 4px 3px; }
.dtable { width: 686px; flex: none; border: 2px solid #8d9296; border-right-width: 1px; border-bottom-width: 1px; }
.thead, .tblank { display: flex; background: #fff; }
.thead { height: 32px; }
.tblank { height: 19px; border-top: 1px solid #e8e8e8; border-bottom: 2px solid #8d9296; }
.th { display: block; font: 12.600px/35px "Liberation Mono", monospace; padding-left: 5px; border-right: 2px solid #ececec; color: #222; }
.td { display: block; border-right: 2px solid #8d9296; }
.col1 { width: 201px; }
.col2 { width: 122px; }
.col3 { width: 134px; }
.col4 { width: 112px; }
.col5 { width: 114px; }
.dside { flex: 1; display: flex; flex-direction: column; align-items: center; padding-left: 2px; }
.dicon { width: 26px; height: 26px; margin: 10.750px 0; flex: none; }
.products { font: 12.600px/16px "Liberation Mono", monospace; margin-top: 7px; white-space: nowrap; }
.dbuttons { display: flex; justify-content: center; gap: 4px; margin-top: 14px; margin-left: 1px; margin-right: -1px; }
.btn { height: 37px; display: flex; align-items: center; background: #e6e6e6; border: 1px solid #c2c2c2; font: 12.500px "Liberation Mono", monospace; color: #222; }
.btn-help { width: 100px; padding-left: 18px; }
.btn-run { width: 93px; padding-left: 20px; }
.bicon { width: 26px; height: 28px; margin-right: 5px; flex: none; }
.btn-run .bicon { width: 22px; margin-right: 9px; }

/* annotations */
.ring { position: absolute; border: 4px solid #e8141c; border-radius: 50%; z-index: 3; }
.ring-radar { left: 394px; top: 20px; width: 79px; height: 37px; }
.ring-geo { left: 414px; top: 222px; width: 134px; height: 34px; }
.ring-sar { left: 705px; top: 274px; width: 125px; height: 43px; }
.pointer { position: absolute; left: 941px; top: 373px; width: 15px; height: 23px; z-index: 3; }
```
